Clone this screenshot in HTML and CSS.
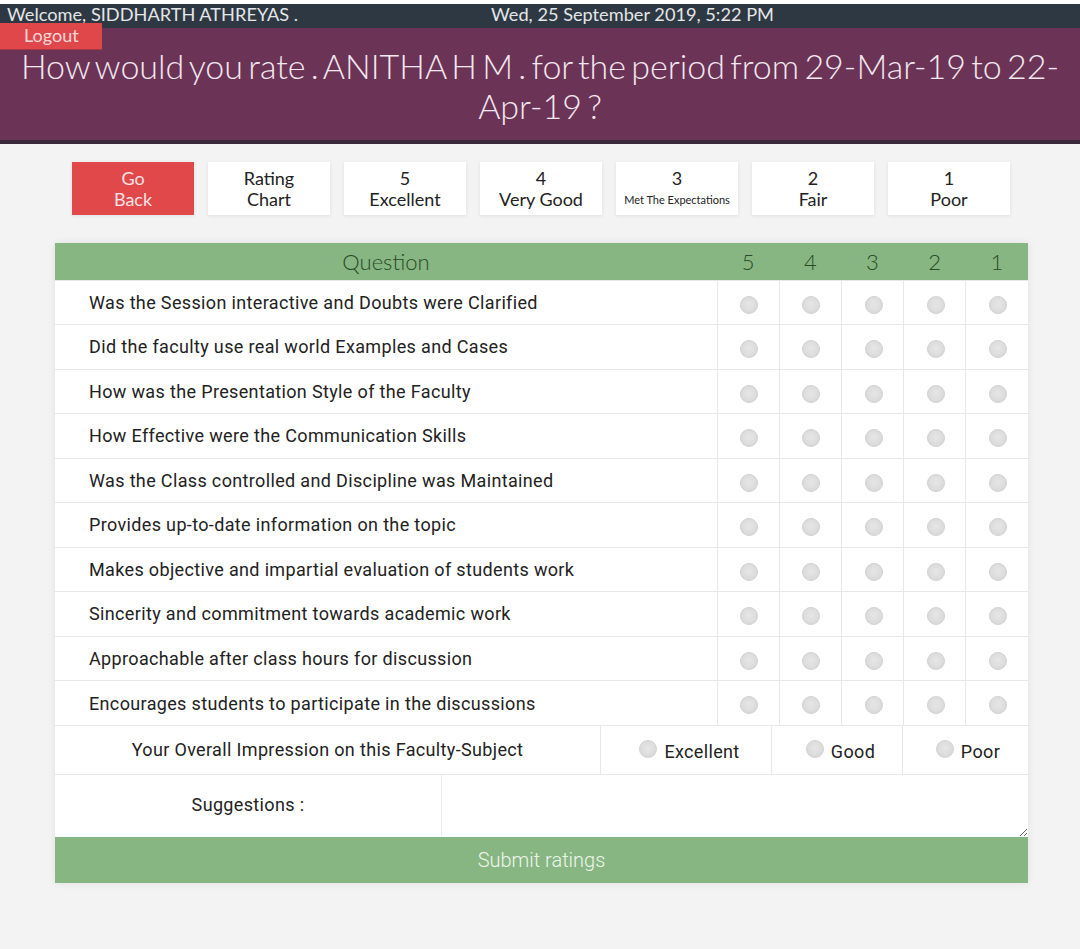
FILE: index.html
```html
<!DOCTYPE html>
<html>
<head>
<meta charset="utf-8">
<link rel="stylesheet" href="styles.css">
</head>
<body>
<header class="header">
  <div class="topbar">
    <span class="welcome">Welcome, SIDDHARTH ATHREYAS .</span>
    <span class="date">Wed, 25 September 2019, 5:22 PM</span>
  </div>
  <a class="logout">Logout</a>
  <div class="banner">
    <h1 class="title">How would you rate . ANITHA H M . for the period from 29-Mar-19 to 22-Apr-19 ?</h1>
  </div>
</header>

<main class="main">
  <div class="chips">
    <div class="chip chip-back">Go<br>Back</div>
    <div class="chip">Rating<br>Chart</div>
    <div class="chip">5<br>Excellent</div>
    <div class="chip">4<br>Very Good</div>
    <div class="chip">3<br><span class="small">Met The Expectations</span></div>
    <div class="chip">2<br>Fair</div>
    <div class="chip">1<br>Poor</div>
  </div>

  <div class="card">
    <table class="qtable">
      <thead>
        <tr><th class="qcol">Question</th><th>5</th><th>4</th><th>3</th><th>2</th><th>1</th></tr>
      </thead>
      <tbody>
        <tr><td class="q">Was the Session interactive and Doubts were Clarified</td><td><input type="radio" name="q1"></td><td><input type="radio" name="q1"></td><td><input type="radio" name="q1"></td><td><input type="radio" name="q1"></td><td><input type="radio" name="q1"></td></tr>
        <tr><td class="q">Did the faculty use real world Examples and Cases</td><td><input type="radio" name="q2"></td><td><input type="radio" name="q2"></td><td><input type="radio" name="q2"></td><td><input type="radio" name="q2"></td><td><input type="radio" name="q2"></td></tr>
        <tr><td class="q">How was the Presentation Style of the Faculty</td><td><input type="radio" name="q3"></td><td><input type="radio" name="q3"></td><td><input type="radio" name="q3"></td><td><input type="radio" name="q3"></td><td><input type="radio" name="q3"></td></tr>
        <tr><td class="q">How Effective were the Communication Skills</td><td><input type="radio" name="q4"></td><td><input type="radio" name="q4"></td><td><input type="radio" name="q4"></td><td><input type="radio" name="q4"></td><td><input type="radio" name="q4"></td></tr>
        <tr><td class="q">Was the Class controlled and Discipline was Maintained</td><td><input type="radio" name="q5"></td><td><input type="radio" name="q5"></td><td><input type="radio" name="q5"></td><td><input type="radio" name="q5"></td><td><input type="radio" name="q5"></td></tr>
        <tr><td class="q">Provides up-to-date information on the topic</td><td><input type="radio" name="q6"></td><td><input type="radio" name="q6"></td><td><input type="radio" name="q6"></td><td><input type="radio" name="q6"></td><td><input type="radio" name="q6"></td></tr>
        <tr><td class="q">Makes objective and impartial evaluation of students work</td><td><input type="radio" name="q7"></td><td><input type="radio" name="q7"></td><td><input type="radio" name="q7"></td><td><input type="radio" name="q7"></td><td><input type="radio" name="q7"></td></tr>
        <tr><td class="q">Sincerity and commitment towards academic work</td><td><input type="radio" name="q8"></td><td><input type="radio" name="q8"></td><td><input type="radio" name="q8"></td><td><input type="radio" name="q8"></td><td><input type="radio" name="q8"></td></tr>
        <tr><td class="q">Approachable after class hours for discussion</td><td><input type="radio" name="q9"></td><td><input type="radio" name="q9"></td><td><input type="radio" name="q9"></td><td><input type="radio" name="q9"></td><td><input type="radio" name="q9"></td></tr>
        <tr><td class="q">Encourages students to participate in the discussions</td><td><input type="radio" name="q10"></td><td><input type="radio" name="q10"></td><td><input type="radio" name="q10"></td><td><input type="radio" name="q10"></td><td><input type="radio" name="q10"></td></tr>
      </tbody>
    </table>

    <div class="overall">
      <div class="overall-label">Your Overall Impression on this Faculty-Subject</div>
      <label class="opt opt-ex"><input type="radio" name="ov"> Excellent</label>
      <label class="opt opt-good"><input type="radio" name="ov"> Good</label>
      <label class="opt opt-poor"><input type="radio" name="ov"> Poor</label>
    </div>

    <div class="suggest">
      <div class="suggest-label">Suggestions :</div>
      <textarea class="suggest-input"></textarea>
    </div>

    <button class="submit">Submit ratings</button>
  </div>
</main>
</body>
</html>
```

FILE: styles.css
```css
* { box-sizing: border-box; }

html, body {
  margin: 0;
  padding: 0;
}

body {
  background: #f2f3f2;
  font-family: Lato, "Liberation Sans", sans-serif;
  color: #222;
}

.header {
  position: relative;
  border-top: 4px solid #ffffff;
}

.topbar {
  display: grid;
  grid-template-columns: 484px 1fr;
  height: 24px;
  background: #2e3842;
  color: #e4e6e8;
  font-size: 18.2px;
  line-height: 20px;
}

.welcome { padding-left: 7px; }
.date { padding-left: 7px; }

.logout {
  position: absolute;
  left: 0;
  top: 19px;
  width: 102px;
  height: 27px;
  background: #e0474b;
  color: #f7d9d9;
  font-size: 18px;
  line-height: 24px;
  padding-left: 24px;
  border-bottom: 1px solid #a8383f;
}

.banner {
  background: #6b3356;
  border-bottom: 4px solid #3b2a3c;
  padding: 18px 14px 14px;
}

.title {
  margin: 0;
  font-weight: 300;
  font-size: 34px;
  line-height: 40px;
  word-spacing: -4px;
  text-align: center;
  color: #f2e8ee;
}

.main {
  padding-top: 18px;
  padding-bottom: 66px;
}

.chips {
  display: flex;
  justify-content: center;
  gap: 14px;
  padding-left: 2px;
}

.chip {
  width: 122px;
  height: 53px;
  background: #ffffff;
  box-shadow: 0 1px 4px rgba(0, 0, 0, 0.08);
  text-align: center;
  font-size: 18px;
  line-height: 21px;
  padding-top: 6px;
  color: #222;
}

.chip .small {
  font-size: 11px;
  line-height: 21px;
  vertical-align: top;
}

.chip-back {
  background: #e0484a;
  color: #fbe3e3;
}

.card {
  width: 973px;
  margin: 28px 0 0 55px;
  background: #fff;
  box-shadow: 0 0 8px rgba(0, 0, 0, 0.08);
}

.qtable {
  width: 100%;
  border-collapse: collapse;
  table-layout: fixed;
}

.qtable th {
  background: #87b682;
  color: #2a4a28;
  font-weight: 300;
  font-size: 22px;
  height: 37px;
  padding: 0;
  text-align: center;
  width: 62.2px;
}

.qtable th.qcol { width: 662px; }

.qtable td {
  height: 44.5px;
  border-top: 1px solid #e8e8e8;
  border-left: 1px solid #e8e8e8;
  text-align: center;
  padding: 0;
  vertical-align: middle;
}

.qtable td.q {
  border-left: none;
  text-align: left;
  padding-left: 34px;
  font-family: Roboto, "Liberation Sans", sans-serif;
  font-size: 18px;
  color: #222;
  letter-spacing: 0.35px;
}

input[type="radio"] {
  appearance: none;
  -webkit-appearance: none;
  width: 18px;
  height: 18px;
  margin: 0;
  border-radius: 50%;
  border: 1px solid #d2d2d2;
  background: radial-gradient(circle at 50% 45%, #e6e6e6 0%, #dcdcdc 60%, #cfcfcf 100%);
  vertical-align: middle;
  position: relative;
  top: 1px;
  left: 1px;
}

.overall {
  display: flex;
  height: 49px;
  border-top: 1px solid #e8e8e8;
  font-family: Roboto, "Liberation Sans", sans-serif;
  font-size: 18px;
  letter-spacing: 0.35px;
}

.overall-label {
  width: 546px;
  text-align: center;
  line-height: 48px;
  border-right: 1px solid #e8e8e8;
}

.opt {
  display: flex;
  align-items: flex-start;
  justify-content: center;
  gap: 8px;
  line-height: 52px;
  border-right: 1px solid #e8e8e8;
  padding-left: 6px;
}

.opt input { top: 14px; }

.opt-ex { width: 171px; }
.opt-good { width: 131px; }
.opt-poor { width: 125px; border-right: none; padding-left: 4px; }

.suggest {
  display: flex;
  height: 63px;
  border-top: 1px solid #e8e8e8;
  font-family: Roboto, "Liberation Sans", sans-serif;
  font-size: 18px;
  letter-spacing: 0.35px;
}

.suggest-label {
  width: 386px;
  text-align: center;
  line-height: 60px;
}

.suggest-input {
  flex: 1;
  border: none;
  border-left: 1px solid #ececec;
  resize: vertical;
  font-family: Roboto, "Liberation Sans", sans-serif;
  outline: none;
}

.submit {
  display: block;
  width: 100%;
  height: 46px;
  border: none;
  background: #87b682;
  color: #eef5ec;
  font-family: Roboto, "Liberation Sans", sans-serif;
  font-weight: 300;
  font-size: 20px;
  padding: 0;
}
```
